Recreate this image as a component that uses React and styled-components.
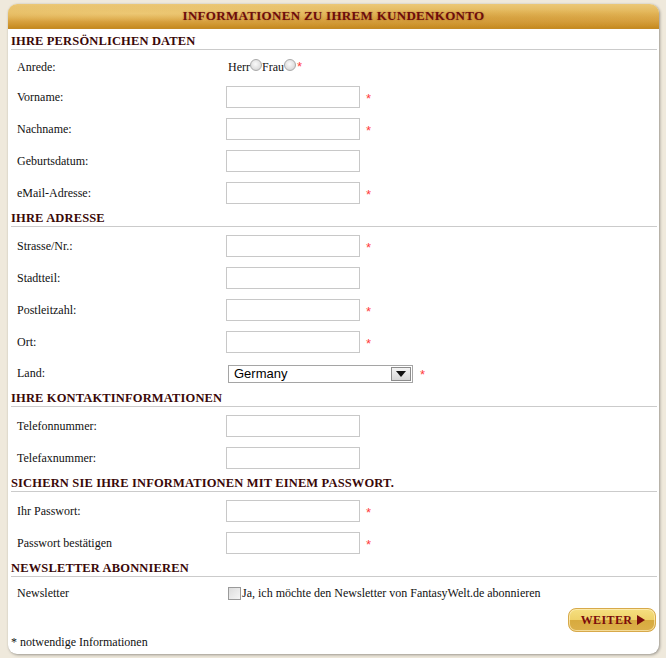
import React from 'react';
import styled, { createGlobalStyle } from 'styled-components';

const GlobalStyle = createGlobalStyle`
  html, body {
    margin: 0;
    padding: 0;
    background: #efe9dc;
  }
  body {
    font-family: "Liberation Serif", "Times New Roman", serif;
    font-size: 12px;
    color: #111;
  }
`;

const Page = styled.div`
  padding: 4px 7px 6px 8px;
`;

const Card = styled.div`
  width: 651px;
  background: #fff;
  border-radius: 9px;
  box-shadow: 1px 1px 3px rgba(0, 0, 0, 0.35), 0 0 1px rgba(0, 0, 0, 0.15);
  overflow: hidden;
`;

const CardHeader = styled.div`
  height: 25px;
  display: flex;
  align-items: center;
  justify-content: center;
  background:
    radial-gradient(ellipse at 20% 40%, rgba(255, 235, 170, 0.35), transparent 40%),
    radial-gradient(ellipse at 70% 60%, rgba(190, 130, 30, 0.25), transparent 45%),
    linear-gradient(#ebc877 0%, #e2b456 40%, #d9a342 70%, #c68a20 100%);
  border-bottom: 1px solid #c48a26;
  box-sizing: border-box;
  font-size: 13px;
  font-weight: bold;
  color: #6e0c0c;
  text-shadow: 0 0 2px rgba(130, 50, 0, 0.45);
  letter-spacing: 0.3px;
`;

const CardBody = styled.div`
  padding: 0 2px 4px 3px;
`;

const SectionTitle = styled.div`
  padding-top: ${(p) => (p.$first ? '4px' : '2px')};
  line-height: ${(p) => (p.$first ? '16px' : '15px')};
  margin-bottom: 3px;
  border-bottom: 1px solid #cbcbcb;
  font-size: 12.5px;
  font-weight: bold;
  letter-spacing: 0.15px;
  color: #3a0808;
  white-space: nowrap;
`;

const Row = styled.div`
  display: grid;
  grid-template-columns: 215px 1fr;
  align-items: center;
  height: ${(p) => p.$h || 32}px;
`;

const Label = styled.div`
  padding-left: 6px;
  font-size: 12px;
`;

const Value = styled.div`
  display: flex;
  align-items: center;
  padding-left: ${(p) => (p.$indent ? '2px' : '0')};
`;

const TextInput = styled.input`
  width: 134px;
  height: 22px;
  box-sizing: border-box;
  border: 1px solid #c8c8c8;
  padding: 2px 4px;
  margin: 0;
  font-family: "Liberation Sans", Arial, sans-serif;
  font-size: 12px;
  outline: none;
`;

const Required = styled.span`
  color: #ff3b3b;
  font-family: "Liberation Sans", Arial, sans-serif;
  font-size: 13px;
  margin-left: ${(p) => p.$gap || 6}px;
  position: relative;
  top: ${(p) => p.$top ?? 1}px;
`;

const RadioText = styled.span`
  font-size: 12px;
`;

const Radio = styled.span`
  display: inline-block;
  width: 12px;
  height: 12px;
  box-sizing: border-box;
  border-radius: 50%;
  border: 1px solid #a9a9a9;
  background: radial-gradient(circle at 45% 40%, #fafafa 0%, #e2e2e2 55%, #c7c7c7 100%);
  position: relative;
  top: -2px;
`;

const SelectBox = styled.div`
  display: flex;
  align-items: stretch;
  width: 185px;
  height: 18px;
  box-sizing: border-box;
  border: 1px solid #a5a5a5;
  background: #fff;
`;

const SelectText = styled.div`
  flex: 1;
  padding-left: 5px;
  font-family: "Liberation Sans", Arial, sans-serif;
  font-size: 13px;
  line-height: 16px;
  color: #000;
`;

const SelectArrow = styled.div`
  width: 20px;
  margin: 1px;
  box-sizing: border-box;
  border: 1px solid #8c8c8c;
  background: linear-gradient(#f4f4f4, #d6d6d6);
  display: flex;
  align-items: center;
  justify-content: center;

  &::after {
    content: '';
    border-left: 5px solid transparent;
    border-right: 5px solid transparent;
    border-top: 6px solid #111;
  }
`;

const CheckBox = styled.span`
  display: inline-block;
  width: 13px;
  height: 13px;
  box-sizing: border-box;
  border: 1px solid #9a9a9a;
  background: linear-gradient(135deg, #dcdcdc, #f6f6f6);
  margin-right: 1px;
`;

const ButtonRow = styled.div`
  display: flex;
  justify-content: flex-end;
  padding-top: 2px;
  padding-right: 1px;
`;

const NextButton = styled.button`
  width: 88px;
  height: 24px;
  box-sizing: border-box;
  border: 1px solid #d7a94a;
  border-radius: 8px;
  background: linear-gradient(#f5df80 0%, #efd26a 48%, #d8aa3e 52%, #dcb04a 100%);
  box-shadow: inset 0 0 0 1px rgba(255, 240, 190, 0.7);
  padding: 0 0 0 2px;
  display: flex;
  align-items: center;
  justify-content: center;
  gap: 5px;
  font-family: "Liberation Serif", "Times New Roman", serif;
  font-size: 12px;
  font-weight: bold;
  letter-spacing: 0.4px;
  color: #7a0c0c;
  cursor: pointer;
`;

const Triangle = styled.span`
  display: inline-block;
  border-top: 5px solid transparent;
  border-bottom: 5px solid transparent;
  border-left: 8px solid #7a0c0c;
`;

const Footnote = styled.div`
  line-height: 15px;
  padding-top: 3px;
  font-size: 12px;
`;

const fieldRows = (fields) =>
  fields.map(([label, required]) => (
    <Row key={label}>
      <Label>{label}</Label>
      <Value>
        <TextInput type={label.includes('Passwort') ? 'password' : 'text'} />
        {required && <Required>*</Required>}
      </Value>
    </Row>
  ));

const App = () => {
  return (
    <Page>
      <GlobalStyle />
      <Card>
        <CardHeader>INFORMATIONEN ZU IHREM KUNDENKONTO</CardHeader>
        <CardBody>
          <SectionTitle $first>IHRE PERSÖNLICHEN DATEN</SectionTitle>
          <Row $h={28}>
            <Label>Anrede:</Label>
            <Value $indent>
              <RadioText>Herr</RadioText>
              <Radio />
              <RadioText>Frau</RadioText>
              <Radio />
              <Required $gap={1} $top={-1}>*</Required>
            </Value>
          </Row>
          {fieldRows([
            ['Vorname:', true],
            ['Nachname:', true],
            ['Geburtsdatum:', false],
            ['eMail-Adresse:', true],
          ])}

          <SectionTitle>IHRE ADRESSE</SectionTitle>
          {fieldRows([
            ['Strasse/Nr.:', true],
            ['Stadtteil:', false],
            ['Postleitzahl:', true],
            ['Ort:', true],
          ])}
          <Row $h={31}>
            <Label>Land:</Label>
            <Value $indent>
              <SelectBox>
                <SelectText>Germany</SelectText>
                <SelectArrow />
              </SelectBox>
              <Required $gap={7}>*</Required>
            </Value>
          </Row>

          <SectionTitle>IHRE KONTAKTINFORMATIONEN</SectionTitle>
          {fieldRows([
            ['Telefonnummer:', false],
            ['Telefaxnummer:', false],
          ])}

          <SectionTitle>SICHERN SIE IHRE INFORMATIONEN MIT EINEM PASSWORT.</SectionTitle>
          {fieldRows([
            ['Ihr Passwort:', true],
            ['Passwort bestätigen', true],
          ])}

          <SectionTitle>NEWSLETTER ABONNIEREN</SectionTitle>
          <Row $h={26}>
            <Label>Newsletter</Label>
            <Value $indent>
              <CheckBox />
              <span>Ja, ich möchte den Newsletter von FantasyWelt.de abonnieren</span>
            </Value>
          </Row>
          <ButtonRow>
            <NextButton>
              WEITER
              <Triangle />
            </NextButton>
          </ButtonRow>
          <Footnote>* notwendige Informationen</Footnote>
        </CardBody>
      </Card>
    </Page>
  );
};

export default App;
